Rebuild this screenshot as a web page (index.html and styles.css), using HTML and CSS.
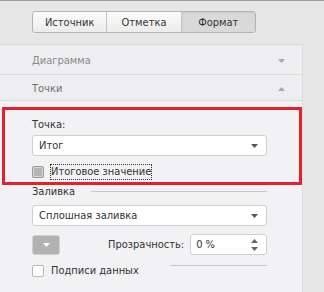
FILE: index.html
```html
<!DOCTYPE html>
<html>
<head>
<meta charset="utf-8">
<link rel="stylesheet" href="styles.css">
</head>
<body>
<div class="app">
  <div class="header">
    <div class="tabs">
      <div class="tab">Источник</div>
      <div class="tab">Отметка</div>
      <div class="tab active">Формат</div>
    </div>
  </div>
  <div class="panel">
    <div class="section">
      <span>Диаграмма</span>
      <svg class="tri" width="7" height="4" viewBox="0 0 7 4"><path d="M0 0H7L3.5 4Z" fill="#a8a8a8"/></svg>
    </div>
    <div class="section">
      <span>Точки</span>
      <svg class="tri" width="7" height="4" viewBox="0 0 7 4"><path d="M0 4H7L3.5 0Z" fill="#a8a8a8"/></svg>
    </div>
    <div class="body">
      <div class="label">Точка:</div>
      <div class="select">
        <span>Итог</span>
        <svg width="7" height="4" viewBox="0 0 7 4"><path d="M0 0H7L3.5 4Z" fill="#555"/></svg>
      </div>
      <div class="check-row first">
        <span class="box filled"></span>
        <span class="check-label focused">Итоговое значение</span>
      </div>
      <div class="group-title">
        <span>Заливка</span>
        <span class="rule"></span>
      </div>
      <div class="select">
        <span>Сплошная заливка</span>
        <svg width="7" height="4" viewBox="0 0 7 4"><path d="M0 0H7L3.5 4Z" fill="#555"/></svg>
      </div>
      <div class="fill-row">
        <div class="color-btn">
          <svg width="7" height="4" viewBox="0 0 7 4"><path d="M0 0H7L3.5 4Z" fill="#fff"/></svg>
        </div>
        <span class="trans-label">Прозрачность:</span>
        <div class="spinner">
          <span>0 %</span>
          <svg width="7" height="12" viewBox="0 0 7 12"><path d="M0 4H7L3.5 0Z M0 8H7L3.5 12Z" fill="#666"/></svg>
        </div>
      </div>
      <div class="check-row last">
        <span class="box"></span>
        <span class="check-label">Подписи данных</span>
        <span class="rule"></span>
      </div>
    </div>
    <div class="highlight"></div>
  </div>
</div>
</body>
</html>
```
FILE: styles.css
```css
html, body {
  margin: 0;
  padding: 0;
}
body {
  width: 324px;
  height: 292px;
  overflow: hidden;
  background: #e6e6e6;
  font-family: "DejaVu Sans Condensed", "DejaVu Sans", sans-serif;
  font-size: 11px;
  color: #333;
}
.app {
  border-top: 1px solid #9c9c9c;
  height: 291px;
  display: flex;
  flex-direction: column;
}
.header {
  height: 44px;
  padding: 10px 0 0 32px;
  box-sizing: border-box;
  border-bottom: 1px solid #d8d8d8;
  width: 303px;
}
.tabs {
  display: flex;
  width: 222px;
  height: 20px;
  border: 1px solid #b4b4b4;
  border-radius: 3px;
  overflow: hidden;
  background: linear-gradient(#fbfbfb, #ececec);
}
.tab {
  flex: 1;
  display: flex;
  align-items: center;
  justify-content: center;
  color: #333;
  border-left: 1px solid #c4c4c4;
}
.tab:first-child {
  border-left: none;
}
.tab.active {
  background: #d9d9d9;
  box-shadow: inset 0 1px 2px rgba(0,0,0,0.08);
}
.panel {
  position: relative;
  width: 302px;
  flex: 1;
  background: #f2f2f4;
  border-right: 1px solid #dcdcdc;
}
.section {
  display: flex;
  align-items: center;
  justify-content: space-between;
  padding: 2px 17px 0 32px;
  box-sizing: border-box;
  height: 30px;
  border-bottom: 1px solid #dcdcdc;
  color: #8a8a8a;
  background: #eeeef0;
}
.section + .section {
  height: 26px;
  color: #6e6e6e;
}
.body {
  padding: 16px 35px 0 32px;
}
.label {
  height: 16px;
  line-height: 16px;
}
.select {
  margin-top: 2px;
  height: 19px;
  border: 1px solid #cfcfcf;
  border-radius: 3px;
  background: #fff;
  display: flex;
  align-items: center;
  justify-content: space-between;
  padding: 0 8px 0 6px;
}
.check-row {
  display: flex;
  align-items: center;
  height: 20px;
}
.check-row.first {
  margin-top: 6px;
}
.box {
  width: 10px;
  height: 10px;
  border: 1px solid #b8b8b8;
  border-radius: 2px;
  background: #fff;
  flex: none;
}
.box.filled {
  background: #b4b4b4;
  border-color: #999;
  box-shadow: inset 0 0 0 1px #d8d8d8;
}
.check-label {
  margin-left: 6px;
  padding: 1px;
  line-height: 14px;
}
.check-label.focused {
  outline: 1px dotted #333;
  outline-offset: -1px;
}
.group-title {
  margin-top: 2px;
  display: flex;
  align-items: center;
  height: 14px;
}
.rule {
  flex: 1;
  height: 1px;
  background: #c8c8c8;
  margin-left: 16px;
}
.group-title + .select {
  margin-top: 7px;
}
.fill-row {
  margin-top: 8px;
  display: flex;
  align-items: center;
  height: 21px;
}
.color-btn {
  width: 26px;
  height: 18px;
  border: 1px solid #d0d0d0;
  border-radius: 3px;
  background: #b2b2b2;
  display: flex;
  align-items: center;
  justify-content: center;
}
.trans-label {
  margin-left: 48px;
}
.spinner {
  margin-left: 6px;
  flex: 1;
  height: 19px;
  border: 1px solid #cfcfcf;
  border-radius: 3px;
  background: #fff;
  display: flex;
  align-items: center;
  justify-content: space-between;
  padding: 0 8px 0 5px;
}
.check-row.last {
  margin-top: 6px;
}
.check-row.last .rule {
  margin-left: 30px;
  align-self: flex-start;
  margin-top: 4px;
}
.highlight {
  position: absolute;
  left: 2px;
  top: 62px;
  width: 294px;
  height: 72px;
  border: 3px solid #e3202c;
}
```
